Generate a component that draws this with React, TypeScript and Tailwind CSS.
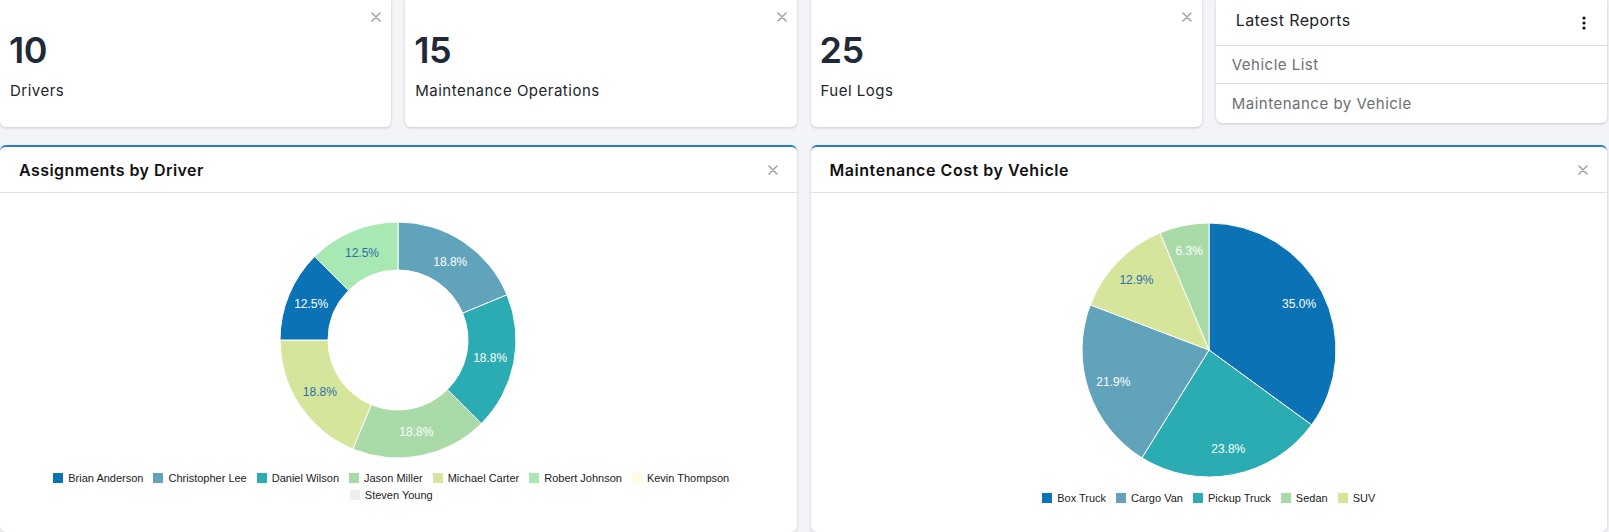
import React from "react";

type Slice = { label: string; value: number; color: string; text: string };

const SANS = "font-['Inter','Noto_Sans',sans-serif]";

function arcPath(cx: number, cy: number, r: number, ri: number, a0: number, a1: number) {
  const p = (rad: number, a: number) => [cx + rad * Math.sin(a), cy - rad * Math.cos(a)];
  const large = a1 - a0 > Math.PI ? 1 : 0;
  const [x0, y0] = p(r, a0);
  const [x1, y1] = p(r, a1);
  if (ri <= 0) {
    return `M ${cx} ${cy} L ${x0} ${y0} A ${r} ${r} 0 ${large} 1 ${x1} ${y1} Z`;
  }
  const [x2, y2] = p(ri, a1);
  const [x3, y3] = p(ri, a0);
  return `M ${x0} ${y0} A ${r} ${r} 0 ${large} 1 ${x1} ${y1} L ${x2} ${y2} A ${ri} ${ri} 0 ${large} 0 ${x3} ${y3} Z`;
}

function PieChart({ data, size, r, ri, labelR }: { data: Slice[]; size: number; r: number; ri: number; labelR: number }) {
  const total = data.reduce((s, d) => s + d.value, 0);
  const cx = size / 2;
  const cy = size / 2;
  let acc = 0;
  return (
    <svg width={size} height={size} viewBox={`0 0 ${size} ${size}`}>
      {data.map((d) => {
        const a0 = (acc / total) * Math.PI * 2;
        acc += d.value;
        const a1 = (acc / total) * Math.PI * 2;
        const mid = (a0 + a1) / 2;
        const lx = cx + labelR * Math.sin(mid);
        const ly = cy - labelR * Math.cos(mid);
        return (
          <g key={d.label}>
            <path d={arcPath(cx, cy, r, ri, a0, a1)} fill={d.color} stroke="#ffffff" strokeWidth={1} />
            <text
              x={lx}
              y={ly}
              textAnchor="middle"
              dominantBaseline="central"
              fill={d.text}
              fontSize={12}
              fontFamily="'Liberation Sans', Arial, sans-serif"
            >
              {((d.value / total) * 100).toFixed(1)}%
            </text>
          </g>
        );
      })}
    </svg>
  );
}

function Legend({ items }: { items: { label: string; color: string }[] }) {
  return (
    <div className="flex flex-wrap justify-center gap-x-[10px] gap-y-[5px] font-['Liberation_Sans',Arial,sans-serif] text-[11px] leading-[12px] text-[#222]">
      {items.map((i) => (
        <div key={i.label} className="flex items-center gap-[5px]">
          <span className="block h-[10px] w-[10px]" style={{ backgroundColor: i.color }} />
          <span>{i.label}</span>
        </div>
      ))}
    </div>
  );
}

function Close({ className = "" }: { className?: string }) {
  return (
    <svg width="10" height="10" viewBox="0 0 10 10" className={className}>
      <path d="M1 1 L9 9 M9 1 L1 9" stroke="#a0a4a8" strokeWidth="1.6" strokeLinecap="round" />
    </svg>
  );
}

function StatCard({ value, label }: { value: string; label: string }) {
  return (
    <div className="relative h-[127px] rounded-b-md bg-white pl-[9px] shadow-[0_1px_3px_rgba(0,0,0,0.18)]">
      <Close className="absolute right-[10px] top-[12px]" />
      <div className="pt-[32px] text-[36px] font-semibold leading-none tracking-[-0.5px] text-[#1f2937]">{value}</div>
      <div className="mt-[13px] pl-[1px] text-[15px] leading-[20px] tracking-[0.5px] text-[#212529]">{label}</div>
    </div>
  );
}

const BLUE = "#0a72b5";
const STEEL = "#62a3bc";
const TEAL = "#2aacb2";
const LGREEN = "#a8dba8";
const YGREEN = "#d5e59b";
const MINT = "#a8e8b2";
const LABELBLUE = "#2a6fae";

export default function App() {
  const donut: Slice[] = [
    { label: "Christopher Lee", value: 3, color: STEEL, text: "#fff" },
    { label: "Daniel Wilson", value: 3, color: TEAL, text: "#fff" },
    { label: "Jason Miller", value: 3, color: LGREEN, text: "#fff" },
    { label: "Michael Carter", value: 3, color: YGREEN, text: LABELBLUE },
    { label: "Brian Anderson", value: 2, color: BLUE, text: "#fff" },
    { label: "Robert Johnson", value: 2, color: MINT, text: LABELBLUE },
  ];
  const pie: Slice[] = [
    { label: "Box Truck", value: 35.0, color: BLUE, text: "#fff" },
    { label: "Pickup Truck", value: 23.8, color: TEAL, text: "#fff" },
    { label: "Cargo Van", value: 21.9, color: STEEL, text: "#fff" },
    { label: "SUV", value: 12.9, color: YGREEN, text: LABELBLUE },
    { label: "Sedan", value: 6.3, color: LGREEN, text: "#fff" },
  ];
  const donutLegend = [
    { label: "Brian Anderson", color: BLUE },
    { label: "Christopher Lee", color: STEEL },
    { label: "Daniel Wilson", color: TEAL },
    { label: "Jason Miller", color: LGREEN },
    { label: "Michael Carter", color: YGREEN },
    { label: "Robert Johnson", color: MINT },
    { label: "Kevin Thompson", color: "#fffde0" },
    { label: "Steven Young", color: "#efefef" },
  ];
  const pieLegend = [
    { label: "Box Truck", color: BLUE },
    { label: "Cargo Van", color: STEEL },
    { label: "Pickup Truck", color: TEAL },
    { label: "Sedan", color: LGREEN },
    { label: "SUV", color: YGREEN },
  ];

  return (
    <div className={`h-[532px] w-[1609px] overflow-hidden bg-[#f2f4f8] ${SANS}`}>
      <div className="grid grid-cols-4 items-start gap-[14px] pr-[2px]">
        <StatCard value="10" label="Drivers" />
        <StatCard value="15" label="Maintenance Operations" />
        <StatCard value="25" label="Fuel Logs" />
        <div className="h-[123px] rounded-b-md bg-white shadow-[0_1px_3px_rgba(0,0,0,0.18)]">
          <div className="flex h-[46px] items-center justify-between border-b border-[#dedede] pl-[20px] pr-[21px]">
            <span className="-mt-[5px] text-[16px] tracking-[0.4px] text-[#212529]">Latest Reports</span>
            <svg width="4" height="14" viewBox="0 0 4 14">
              <circle cx="2" cy="2" r="1.6" fill="#111" />
              <circle cx="2" cy="7" r="1.6" fill="#111" />
              <circle cx="2" cy="12" r="1.6" fill="#111" />
            </svg>
          </div>
          <div className="flex h-[38px] items-center border-b border-[#dedede] pl-[16px] pt-[2px] text-[15px] tracking-[0.5px] text-[#6b7075]">
            Vehicle List
          </div>
          <div className="flex h-[38px] items-center pl-[16px] pt-[2px] text-[15px] tracking-[0.5px] text-[#6b7075]">
            Maintenance by Vehicle
          </div>
        </div>
      </div>

      <div className="mt-[18px] grid grid-cols-2 gap-[14px] pr-[2px]">
        <div className="h-[387px] rounded-md border-t-2 border-[#2c7bc9] bg-white shadow-[0_1px_3px_rgba(0,0,0,0.18)]">
          <div className="flex h-[46px] items-center justify-between border-b border-[#e2e2e2] pl-[19px] pr-[19px]">
            <span className="text-[16px] font-semibold tracking-[0.45px] text-[#111]">Assignments by Driver</span>
            <Close />
          </div>
          <div className="flex flex-col items-center pt-[27px]">
            <PieChart data={donut} size={240} r={118} ri={70} labelR={94} />
            <div className="mt-[12px] w-[700px] pr-[14px]">
              <Legend items={donutLegend} />
            </div>
          </div>
        </div>
        <div className="h-[387px] rounded-md border-t-2 border-[#2c7bc9] bg-white shadow-[0_1px_3px_rgba(0,0,0,0.18)]">
          <div className="flex h-[46px] items-center justify-between border-b border-[#e2e2e2] pl-[19px] pr-[19px]">
            <span className="text-[16px] font-semibold tracking-[0.55px] text-[#111]">Maintenance Cost by Vehicle</span>
            <Close />
          </div>
          <div className="flex flex-col items-center pt-[28px]">
            <PieChart data={pie} size={258} r={127} ri={0} labelR={101} />
            <div className="mt-[13px]">
              <Legend items={pieLegend} />
            </div>
          </div>
        </div>
      </div>
    </div>
  );
}
